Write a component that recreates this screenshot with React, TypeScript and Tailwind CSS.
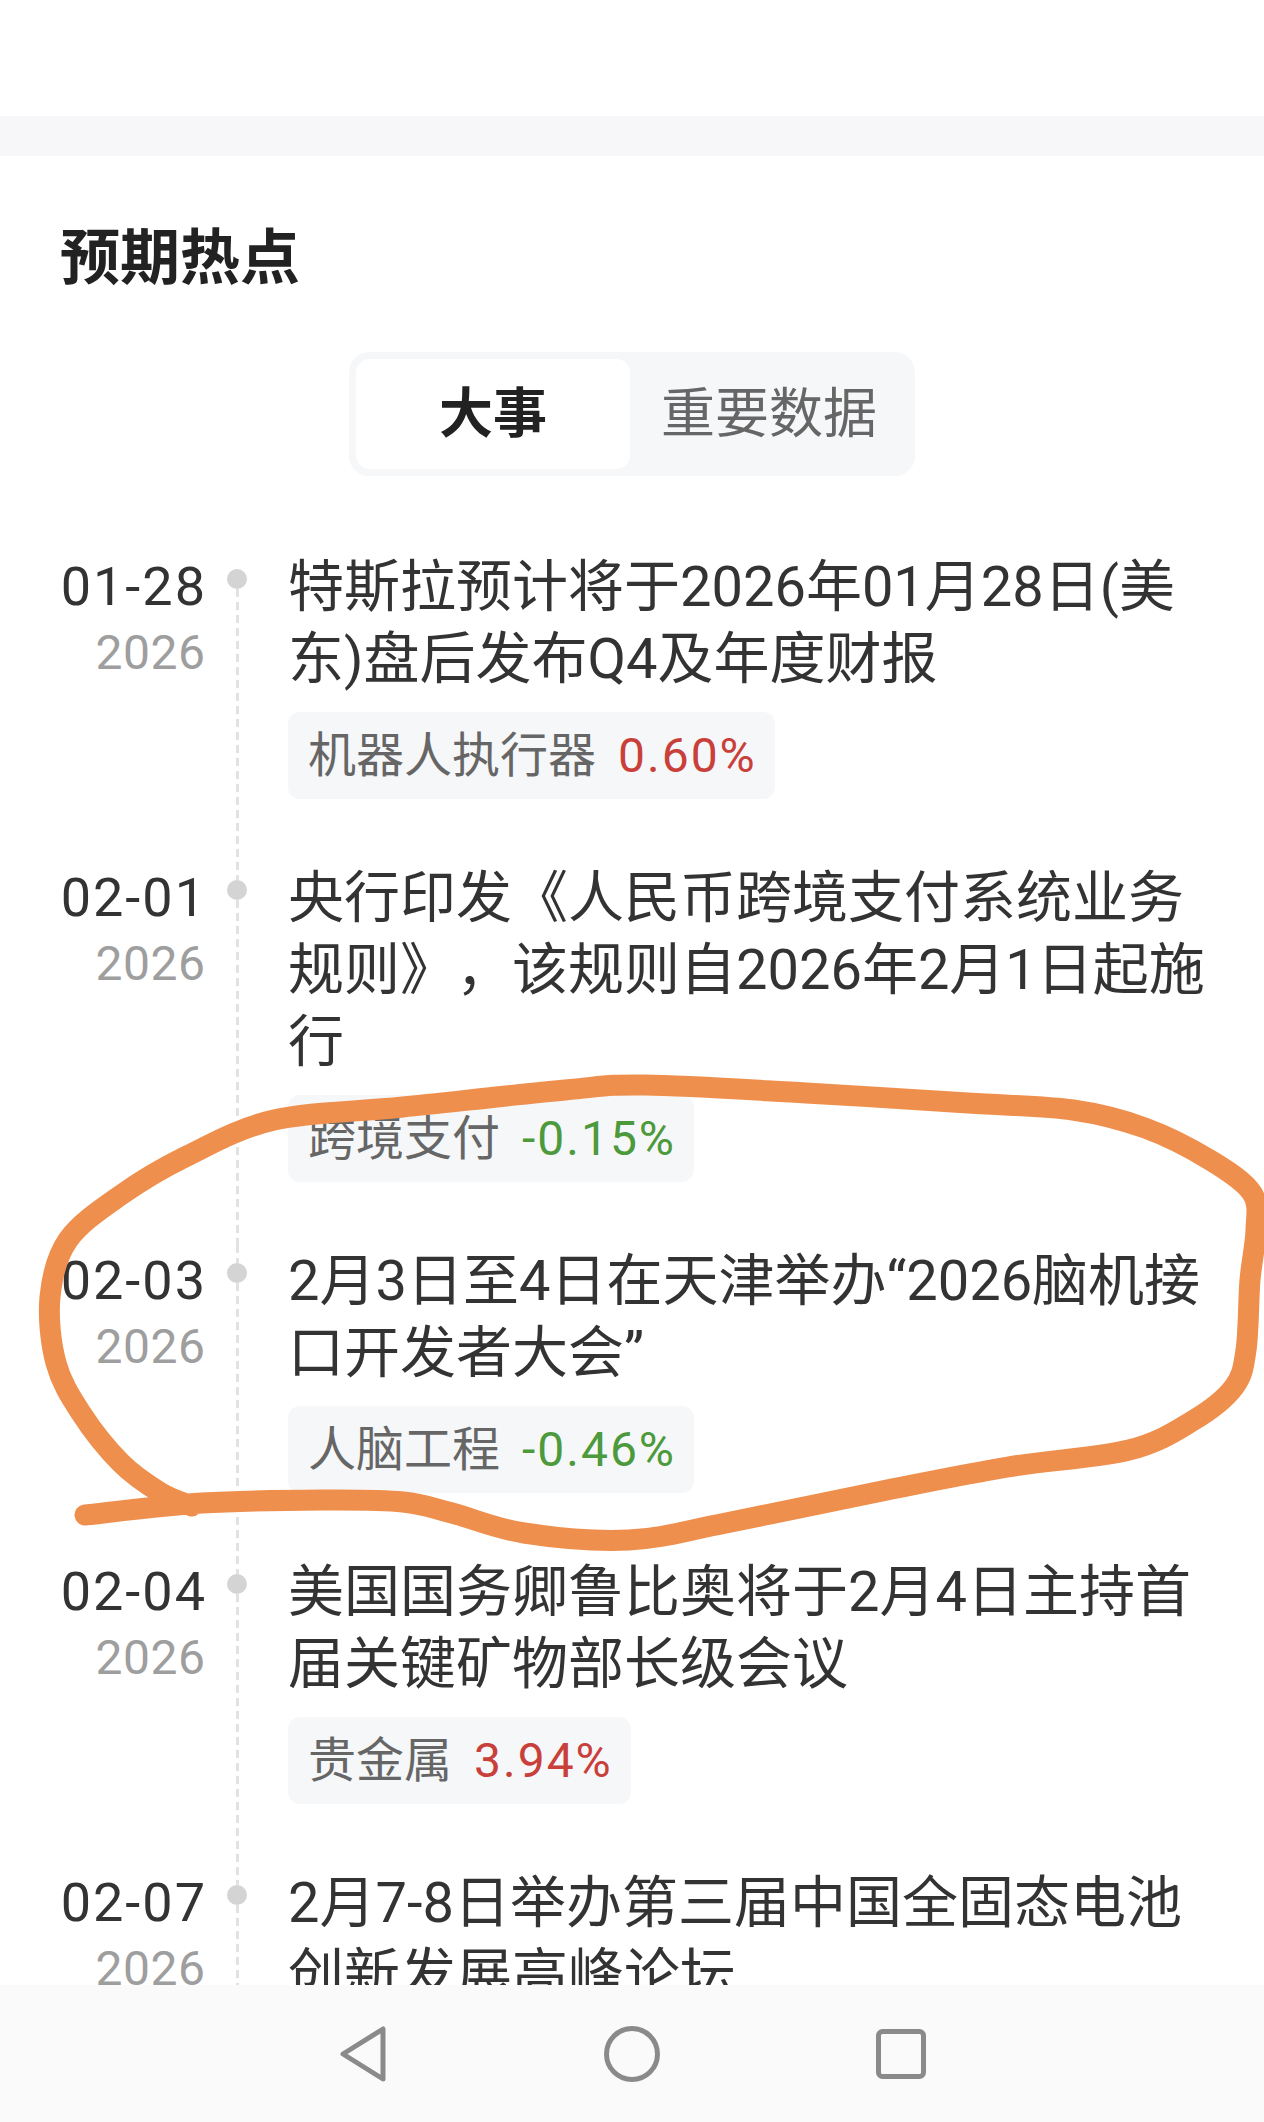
import React from 'react';

type Item = { date: string; lines: string[]; tag?: string; pct?: string; up?: boolean };

const items: Item[] = [
  {
    date: '01-28',
    lines: ['特斯拉预计将于2026年01月28日(美', '东)盘后发布Q4及年度财报'],
    tag: '机器人执行器',
    pct: '0.60%',
    up: true,
  },
  {
    date: '02-01',
    lines: ['央行印发《人民币跨境支付系统业务', '规则》，该规则自2026年2月1日起施', '行'],
    tag: '跨境支付',
    pct: '-0.15%',
    up: false,
  },
  {
    date: '02-03',
    lines: ['2月3日至4日在天津举办“2026脑机接', '口开发者大会”'],
    tag: '人脑工程',
    pct: '-0.46%',
    up: false,
  },
  {
    date: '02-04',
    lines: ['美国国务卿鲁比奥将于2月4日主持首', '届关键矿物部长级会议'],
    tag: '贵金属',
    pct: '3.94%',
    up: true,
  },
  {
    date: '02-07',
    lines: ['2月7-8日举办第三届中国全固态电池', '创新发展高峰论坛'],
  },
];

const DASH =
  'bg-[repeating-linear-gradient(to_bottom,#e2e2e2_0px,#e2e2e2_8px,transparent_8px,transparent_13px)]';

const orangePts: number[][] = [
  [85, 1515],
  [202, 1503],
  [323, 1500],
  [403, 1502],
  [452, 1513],
  [524, 1533],
  [629, 1540],
  [726, 1523],
  [887, 1490],
  [1008, 1467],
  [1129, 1450],
  [1194, 1420],
  [1234, 1387],
  [1246, 1350],
  [1250, 1280],
  [1256, 1230],
  [1252, 1193],
  [1210, 1160],
  [1145, 1128],
  [1073, 1110],
  [968, 1103],
  [806, 1093],
  [645, 1085],
  [565, 1090],
  [403, 1107],
  [274, 1120],
  [185, 1157],
  [121, 1195],
  [68, 1240],
  [50, 1297],
  [56, 1363],
  [81, 1413],
  [121, 1463],
  [161, 1493],
  [192, 1506],
];

function smoothPath(pts: number[][]) {
  let d = `M${pts[0][0]},${pts[0][1]}`;
  for (let i = 0; i < pts.length - 1; i++) {
    const p0 = pts[i - 1] || pts[i];
    const p1 = pts[i];
    const p2 = pts[i + 1];
    const p3 = pts[i + 2] || p2;
    const c1x = p1[0] + (p2[0] - p0[0]) / 6;
    const c1y = p1[1] + (p2[1] - p0[1]) / 6;
    const c2x = p2[0] - (p3[0] - p1[0]) / 6;
    const c2y = p2[1] - (p3[1] - p1[1]) / 6;
    d += ` C${c1x.toFixed(1)},${c1y.toFixed(1)} ${c2x.toFixed(1)},${c2y.toFixed(1)} ${p2[0]},${p2[1]}`;
  }
  return d;
}

export default function App() {
  return (
    <div className="relative w-[1264px] h-[2122px] bg-white flex flex-col overflow-hidden font-['Roboto','Noto_Sans_CJK_SC',sans-serif] text-[#333]">
      <div className="h-[116px] shrink-0" />
      <div className="h-[40px] shrink-0 bg-[#f7f7f9]" />

      <div className="flex-1 min-h-0 overflow-hidden">
        <h2 className="pl-[60px] pt-[73px] text-[60px] leading-[60px] font-bold text-[#222]">预期热点</h2>

        <div className="mt-[63px] mx-auto w-[566px] h-[124px] p-[7px] rounded-[20px] bg-[#f6f7f9] flex">
          <div className="w-[274px] rounded-[14px] bg-white flex items-center justify-center text-[54px] font-bold text-[#222]">
            大事
          </div>
          <div className="flex-1 flex items-center justify-center text-[54px] text-[#666]">重要数据</div>
        </div>

        <div className="mt-[75px]">
          {items.map((it, idx) => (
            <div key={it.date} className="flex">
              <div className="w-[205px] shrink-0 text-right">
                <div className="text-[54px] leading-[72px] tracking-[2px] mr-[-2px] text-[#333]">{it.date}</div>
                <div className="text-[48px] leading-[60px] tracking-[0.5px] mr-[-0.5px] text-[#9e9e9e]">2026</div>
              </div>
              <div className="w-[64px] shrink-0 flex flex-col items-center">
                <div className={idx === 0 ? 'h-[18px] w-[3px]' : `h-[18px] w-[3px] ${DASH}`} />
                <div className="w-[20px] h-[20px] rounded-full bg-[#d4d4d4] shrink-0" />
                <div className={`flex-1 w-[3px] ${DASH}`} />
              </div>
              <div className="flex-1 pl-[19px] pb-[63px]">
                <div className="text-[56px] leading-[72px] text-[#333] [text-spacing-trim:space-all]">
                  {it.lines.map((l) => (
                    <div key={l} className="whitespace-nowrap">
                      {l}
                    </div>
                  ))}
                </div>
                {it.tag && (
                  <div className="mt-[17px] inline-flex h-[87px] items-center pl-[20px] pr-[18px] rounded-[12px] bg-[#f6f7f9] text-[48px] leading-[60px]">
                    <span className="text-[#666]">{it.tag}</span>
                    <span
                      className={
                        it.up
                          ? 'ml-[22px] tracking-[2px] text-[#c9403a]'
                          : 'ml-[22px] tracking-[2px] text-[#4c9a3c]'
                      }
                    >
                      {it.pct}
                    </span>
                  </div>
                )}
              </div>
            </div>
          ))}
        </div>
      </div>

      <nav className="h-[137px] shrink-0 bg-[#fafafa] flex items-center justify-center gap-[169px]">
        <div className="w-[100px] flex justify-center">
          <svg width="50" height="58" viewBox="0 0 50 58" fill="none">
            <path d="M45 4 L45 54 L5 29 Z" stroke="#8a8a8a" strokeWidth="5" strokeLinejoin="round" />
          </svg>
        </div>
        <div className="w-[100px] flex justify-center">
          <svg width="58" height="58" viewBox="0 0 58 58" fill="none">
            <circle cx="29" cy="29" r="25.5" stroke="#8a8a8a" strokeWidth="5" />
          </svg>
        </div>
        <div className="w-[100px] flex justify-center">
          <svg width="52" height="52" viewBox="0 0 52 52" fill="none">
            <rect x="3.5" y="3.5" width="45" height="45" rx="4" stroke="#8a8a8a" strokeWidth="5" />
          </svg>
        </div>
      </nav>

      <svg
        className="absolute inset-0 pointer-events-none"
        width="1264"
        height="2122"
        viewBox="0 0 1264 2122"
        fill="none"
      >
        <path
          d={smoothPath(orangePts)}
          stroke="#ef8f4d"
          strokeWidth="21"
          strokeLinecap="round"
          strokeLinejoin="round"
        />
      </svg>
    </div>
  );
}
